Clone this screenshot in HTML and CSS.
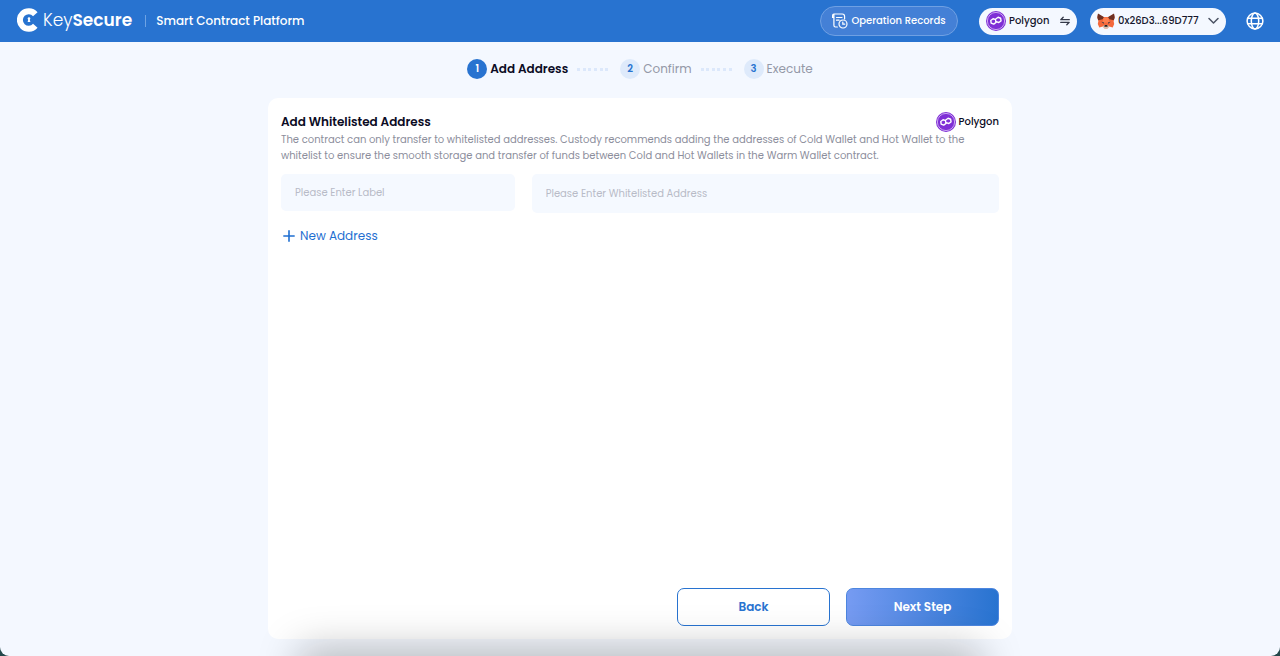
FILE: index.html
```html
<!DOCTYPE html>
<html lang="en">
<head>
<meta charset="utf-8">
<meta name="viewport" content="width=device-width, initial-scale=1">
<title>KeySecure | Smart Contract Platform</title>
<link rel="stylesheet" href="styles.css">
</head>
<body>
<svg class="defs" width="0" height="0" aria-hidden="true">
  <symbol id="polygon" viewBox="0 0 20 20">
    <circle cx="10" cy="10" r="10" fill="#7f2fd6"/>
    <circle cx="10" cy="10" r="8.600" fill="none" stroke="#dcc2f6" stroke-width=".8"/>
    <path d="M9.300 8.300 7.400 7.400 4.900 8.800v2.700l2.400 1.300 2.400-1.300V8.200l2.900-1.600 2.400 1.300v2.700l-2.400 1.300-1.900-1" transform="rotate(-8 10 10)" fill="none" stroke="#fff" stroke-width="1.400" stroke-linejoin="round" stroke-linecap="round"/>
  </symbol>
</svg>
<div class="page">
  <header class="topbar">
    <a class="brand" href="#">
      <svg class="brand-mark" viewBox="0 0 22 24" aria-hidden="true">
        <path d="M18.300 6.200A8.800 8.800 0 1 0 18.300 17.800" fill="none" stroke="#fff" stroke-width="6"/>
        <circle cx="12" cy="10.600" r="1.300" fill="#fff"/>
        <path d="M11.500 10.500h1l.9 3.500h-2.800z" fill="#fff"/>
      </svg>
      <span class="brand-name">Key<b>Secure</b></span>
    </a>
    <span class="brand-title">Smart Contract Platform</span>
    <nav class="tools">
      <button class="records" type="button">
        <svg width="16" height="16" viewBox="0 0 16 16" fill="none" stroke="#fff" stroke-width="1.200" stroke-linecap="round" aria-hidden="true">
          <path d="M12.600 6V3.400c0-1.500-.8-2.400-2.300-2.400H2.200M3.600 14h-.2c-1 0-1.500-.7-1.500-1.700V1.200M1.900 1C.9 1 .6 1.700.6 2.500v2h1.300M4.500 4.500h5.500M4.500 7.200h2.600M3.400 14h2"/>
          <circle cx="11" cy="11" r="4"/>
          <path d="M10.800 9v2.200h1.900"/>
        </svg>
        Operation Records
      </button>
      <button class="pill network" type="button">
        <svg width="20" height="20" aria-hidden="true"><use href="#polygon"/></svg>
        <span>Polygon</span>
        <svg class="swap" width="10" height="10" viewBox="0 0 10 10" fill="none" stroke="#333847" stroke-width="1.300" stroke-linecap="round" stroke-linejoin="round" aria-hidden="true"><path d="M9.300 3.700H.8L3.200 1.200M.7 6.300h8.500L6.800 8.800"/></svg>
      </button>
      <button class="pill account" type="button">
        <svg width="18" height="16" viewBox="0 0 18 16" aria-hidden="true">
          <path d="M1 1l5.500 3h5L17 1l.6 4-1 3 .6 3-1.500 3.400-3.500-.8L10.500 15.500h-3L5.800 13.600l-3.500.8L.8 11l.6-3-1-3z" fill="#f4683b"/>
          <path d="M1 .6 7.200 4.300 5.600 6.300 1.200 7.300.3 4.200zM17 .6l-6.200 3.700 1.600 2 4.400 1 .9-3.100z" fill="#6d3022"/>
          <path d="M6.600 4.500h4.800l1 5H5.600z" fill="#ff8050"/>
          <path d="M4.300 8.700 7 9.500 6.800 10.800zM13.700 8.700 11 9.500l.2 1.300z" fill="#26344a"/>
          <path d="M5.800 13.300 7.400 12h3.200l1.600 1.300-1.600 2H7.400z" fill="#d7c1b3"/>
          <path d="M7.700 12h2.600l.4 1.700H7.300z" fill="#2b2222"/>
        </svg>
        <span>0x26D3...69D777</span>
        <svg class="chevron" width="11" height="8" viewBox="0 0 11 8" fill="none" stroke="#4c5364" stroke-width="1.500" stroke-linecap="round" stroke-linejoin="round" aria-hidden="true"><path d="M1 1.500 5.500 6 10 1.500"/></svg>
      </button>
      <button class="globe" type="button" aria-label="Language">
        <svg width="18" height="18" viewBox="0 0 18 18" fill="none" stroke="#fff" stroke-width="1.500" aria-hidden="true">
          <circle cx="9" cy="9" r="7.900"/><ellipse cx="9" cy="9" rx="3.700" ry="7.900"/><path d="M1.500 6.300h15M1.500 11.700h15"/>
        </svg>
      </button>
    </nav>
  </header>

  <ol class="steps">
    <li class="step current" aria-current="step"><span class="num">1</span>Add Address</li>
    <li class="dots" aria-hidden="true"><i></i><i></i><i></i><i></i><i></i><i></i></li>
    <li class="step"><span class="num">2</span>Confirm</li>
    <li class="dots" aria-hidden="true"><i></i><i></i><i></i><i></i><i></i><i></i></li>
    <li class="step"><span class="num">3</span>Execute</li>
  </ol>

  <main class="card">
    <div class="card-head">
      <h1>Add Whitelisted Address</h1>
      <span class="chain"><svg width="20" height="20" aria-hidden="true"><use href="#polygon"/></svg>Polygon</span>
    </div>
    <p class="intro">The contract can only transfer to whitelisted addresses. Custody recommends adding the addresses of Cold Wallet and Hot Wallet to the whitelist to ensure the smooth storage and transfer of funds between Cold and Hot Wallets in the Warm Wallet contract.</p>
    <form class="form">
      <div class="fields">
        <input class="field" type="text" aria-label="Label" placeholder="Please Enter Label">
        <input class="field field-address" type="text" aria-label="Whitelisted address" placeholder="Please Enter Whitelisted Address">
      </div>
      <button class="add" type="button">
        <svg width="12" height="12" viewBox="0 0 12 12" stroke="#1f6fd1" stroke-width="1.600" aria-hidden="true"><path d="M6 .3v11.400M.3 6h11.400"/></svg>
        New Address
      </button>
      <div class="actions">
        <button class="btn back" type="button">Back</button>
        <button class="btn next" type="submit">Next Step</button>
      </div>
    </form>
  </main>
</div>
</body>
</html>
```
FILE: styles.css
```css
* { box-sizing: border-box; }
html { background: #24484b; }
body {
  margin: 0;
  font-family: Poppins, Inter, "Open Sans", sans-serif;
  font-size: 12px;
  color: #0b0b24;
}
button, input { font: inherit; color: inherit; }
button { border: 0; padding: 0; background: none; cursor: pointer; }
.defs { position: absolute; }

.page {
  position: relative;
  display: flex;
  flex-direction: column;
  min-height: 100vh;
  padding-bottom: 17px;
  overflow: hidden;
  background: #f4f8ff;
  border-radius: 0 0 9px 9px;
}
/* soft shade rising from the lower edge */
.page::after {
  content: "";
  position: absolute;
  top: 100%;
  left: 24%;
  right: 24%;
  height: 40px;
  box-shadow: 0 0 40px 8px rgba(10, 10, 0, .26);
  pointer-events: none;
}

.topbar {
  display: flex;
  align-items: center;
  height: 42px;
  padding: 0 16px 0 17px;
  background: #2873d0;
  color: #fff;
}
.brand {
  display: flex;
  align-items: center;
  gap: 4px;
  color: inherit;
  text-decoration: none;
}
.brand-mark { width: 22px; height: 24px; margin-bottom: 3px; }
.brand-name { font-size: 17px; font-weight: 300; line-height: 24px; margin-bottom: 2px; }
.brand-name b { font-weight: 600; }
.brand-title {
  display: flex;
  align-items: center;
  font-weight: 500;
  white-space: nowrap;
}
.brand-title::before {
  content: "";
  width: 1px;
  height: 12px;
  margin: 0 10px 0 13px;
  background: #6ea3e4;
}
.tools { display: flex; align-items: center; margin-left: auto; font-size: 10px; }
.records {
  display: flex;
  align-items: center;
  justify-content: center;
  gap: 3px;
  width: 138px;
  height: 30px;
  margin-right: 21px;
  border: 1px solid #6fa0e3;
  border-radius: 15px;
  background: #4480d6;
  font-weight: 500;
  white-space: nowrap;
}
.pill {
  display: flex;
  align-items: center;
  height: 27px;
  border-radius: 14px;
  background: #f4f8ff;
  color: #15162c;
  font-weight: 500;
  white-space: nowrap;
}
.network { gap: 3px; width: 98px; padding: 0 7px; margin-right: 13px; }
.account { gap: 3px; width: 136px; padding: 0 7px; margin-right: 20px; }
.swap, .chevron { margin-left: auto; }
.globe { display: flex; }

.steps {
  display: flex;
  align-items: center;
  justify-content: center;
  margin: 17px 0 19px;
  padding: 0;
  list-style: none;
  color: #9499a8;
}
.step { display: flex; align-items: center; gap: 3px; line-height: 20px; }
.current { font-weight: 600; color: #0b0b24; }
.num {
  width: 20px;
  height: 20px;
  border-radius: 50%;
  background: #deeafb;
  color: #2873d0;
  font-size: 10px;
  font-weight: 600;
  text-align: center;
}
.current .num { background: #2873d0; color: #fff; }
.dots { display: flex; justify-content: space-between; width: 31px; margin: 0 12px 0 9px; }
.dots i { width: 3px; height: 3px; background: #dce8fb; }

.card {
  display: flex;
  flex: 1;
  flex-direction: column;
  width: 100%;
  max-width: 744px;
  margin: 0 auto;
  padding: 14px 13px 13px;
  border-radius: 10px;
  background: #fff;
}
.card-head { display: flex; align-items: center; justify-content: space-between; }
h1 { margin: 0; font-size: 12px; line-height: 20px; font-weight: 600; }
.chain { display: flex; align-items: center; gap: 3px; font-size: 10px; font-weight: 500; }
.intro { margin: 0 0 10px; font-size: 10px; line-height: 16px; color: #8c8e9c; }
.form { display: flex; flex: 1; flex-direction: column; align-items: stretch; }
.fields { display: grid; grid-template-columns: 1fr 2fr; align-items: start; gap: 17px; }
.field {
  width: 100%;
  height: 37px;
  padding: 0 14px;
  border: 0;
  border-radius: 5px;
  background: #f5f9ff;
  font-size: 10px;
}
.field-address { height: 39px; }
.field::placeholder { color: #b8bbc7; opacity: 1; }
.add {
  display: flex;
  align-items: center;
  gap: 5px;
  align-self: flex-start;
  height: 20px;
  margin-top: 13px;
  padding-left: 2px;
  color: #1f6fd1;
}
.actions { display: flex; justify-content: flex-end; gap: 16px; margin-top: auto; }
.btn { width: 153px; height: 38px; border-radius: 7px; font-weight: 600; }
.back { border: 1px solid #2873d0; background: #fff; color: #2873d0; }
.next { border: 1px solid #4d86df; background: linear-gradient(90deg, #769bf2, #2873d0); color: #fff; }
```
